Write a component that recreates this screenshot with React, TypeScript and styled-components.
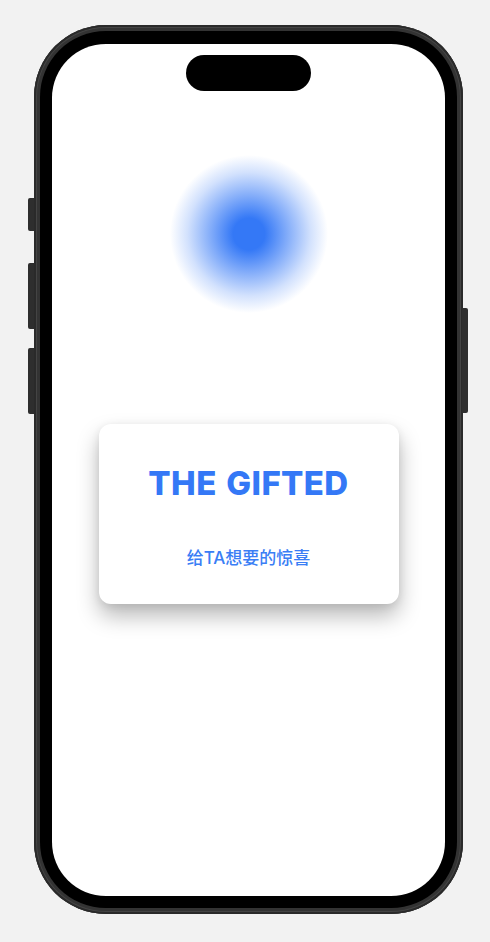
import React from "react";
import styled, { createGlobalStyle } from "styled-components";

const GlobalStyle = createGlobalStyle`
  html, body {
    margin: 0;
    padding: 0;
    background: #f2f2f2;
  }
  body {
    font-family: Inter, "Noto Sans CJK SC", sans-serif;
  }
`;

function App() {
  return (
    <>
      <GlobalStyle />
      <Page>
        <Phone>
          <SideButton side="left" top={173} height={33} />
          <SideButton side="left" top={238} height={66} />
          <SideButton side="left" top={323} height={66} />
          <SideButton side="right" top={283} height={105} />
          <Bezel>
            <Screen>
              <Island />
              <Glow />
              <Card>
                <Title>THE GIFTED</Title>
                <Subtitle>给TA想要的惊喜</Subtitle>
              </Card>
            </Screen>
          </Bezel>
        </Phone>
      </Page>
    </>
  );
}

const Page = styled.div`
  width: 490px;
  height: 942px;
  padding: 25px 0 0 34px;
  box-sizing: border-box;
  background: #f2f2f2;
  overflow: hidden;
`;

const Phone = styled.div`
  position: relative;
  width: 429px;
  height: 889px;
  box-sizing: border-box;
  padding: 6px;
  border-radius: 72px;
  background: #333333;
  box-shadow: inset 0 0 0 2px #2a2a2a, inset 0 0 0 3px #444444;
`;

const SideButton = styled.div<{ side: "left" | "right"; top: number; height: number }>`
  position: absolute;
  top: ${(p) => p.top}px;
  ${(p) => (p.side === "left" ? "left: -6px;" : "right: -5px;")}
  width: 6px;
  height: ${(p) => p.height}px;
  background: #2e2e2e;
  border-radius: ${(p) => (p.side === "left" ? "2px 0 0 2px" : "0 2px 2px 0")};
`;

const Bezel = styled.div`
  height: 100%;
  box-sizing: border-box;
  padding: 13px 12px 12px 12px;
  border-radius: 66px;
  background: #000;
`;

const Screen = styled.div`
  height: 100%;
  border-radius: 54px;
  background: #fff;
  display: flex;
  flex-direction: column;
  align-items: center;
  overflow: hidden;
`;

const Island = styled.div`
  margin-top: 11px;
  width: 125px;
  height: 36px;
  border-radius: 18px;
  background: #000;
`;

const Glow = styled.div`
  margin-top: 64px;
  width: 158px;
  height: 158px;
  border-radius: 50%;
  background: radial-gradient(
    circle closest-side,
    #3478f6 0%,
    #3478f6 20%,
    rgba(52, 120, 246, 0.62) 48%,
    rgba(52, 120, 246, 0.22) 78%,
    rgba(52, 120, 246, 0) 100%
  );
`;

const Card = styled.div`
  margin-top: 111px;
  width: 300px;
  height: 180px;
  box-sizing: border-box;
  padding-top: 39px;
  border-radius: 12px;
  background: #fff;
  box-shadow: 0 12px 22px rgba(0, 0, 0, 0.28), 0 2px 8px rgba(0, 0, 0, 0.08);
  display: flex;
  flex-direction: column;
  align-items: center;
`;

const Title = styled.h1`
  margin: 0;
  font-family: Inter, sans-serif;
  font-size: 33px;
  font-weight: 800;
  line-height: 40px;
  letter-spacing: 0.4px;
  word-spacing: 2px;
  color: #3478f6;
`;

const Subtitle = styled.p`
  margin: 42px 0 0;
  font-family: Inter, "Noto Sans CJK SC", sans-serif;
  font-size: 17px;
  font-weight: 500;
  line-height: 26px;
  color: #3a7ef5;
`;

export default App;
